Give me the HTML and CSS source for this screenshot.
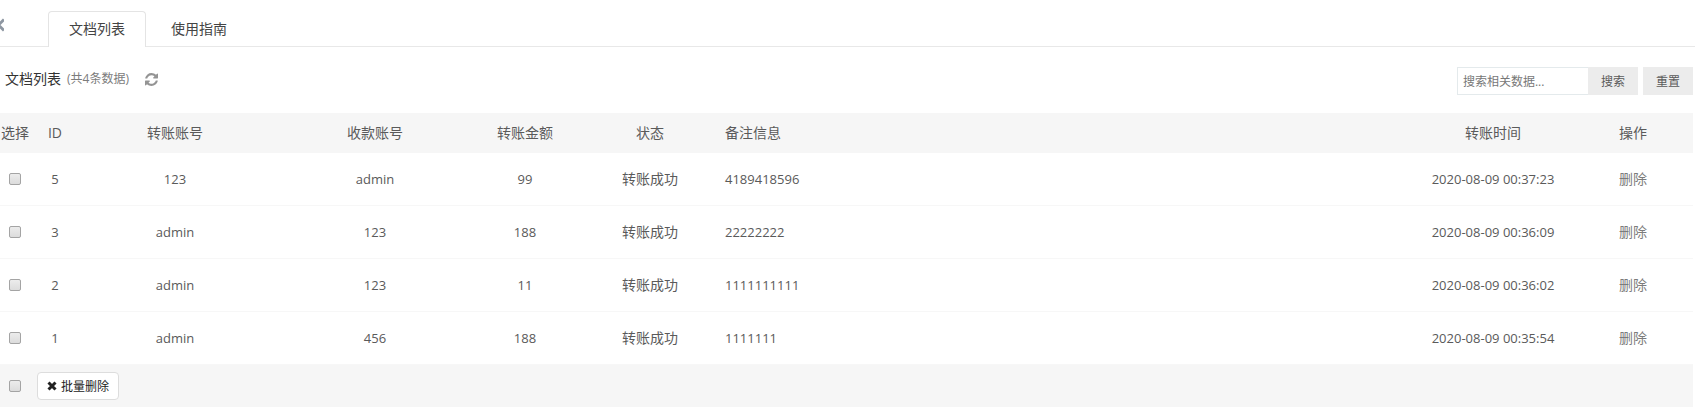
FILE: index.html
```
<!DOCTYPE html>
<html lang="zh-CN">
<head>
<meta charset="utf-8">
<title>文档列表</title>
<link rel="stylesheet" href="styles.css">
</head>
<body>
<nav class="tabs">
  <button class="back" type="button" aria-label="返回"><svg width="4" height="14" viewBox="0 0 4 14"><path d="M4 1.500L-1.500 7l5.500 5.500" fill="none" stroke="#8e97a2" stroke-width="3"/></svg></button>
  <a class="tab active" href="#list">文档列表</a>
  <a class="tab" href="#guide">使用指南</a>
</nav>
<header class="toolbar">
  <h1 class="title">文档列表</h1>
  <span class="count">(共4条数据)</span>
  <button class="refresh" type="button" aria-label="刷新"><svg width="13" height="13" viewBox="0 0 1536 1536"><path fill="#949494" d="M1511 928q0 5-1 7-64 268-268 434.500T764 1536q-146 0-282.500-55T238 1324l-129 129q-19 19-45 19t-45-19-19-45V960q0-26 19-45t45-19h448q26 0 45 19t19 45-19 45l-137 137q71 66 161 102t187 36q134 0 250-65t186-179q11-17 53-117 8-23 30-23h192q13 0 22.500 9.500t9.500 22.500zm25-800v448q0 26-19 45t-45 19h-448q-26 0-45-19t-19-45 19-45l138-138Q969 256 768 256q-134 0-250 65T332 500q-11 17-53 117-8 23-30 23H50q-13 0-22.500-9.500T18 608v-7q65-268 270-434.500T768 0q146 0 284 55.500T1297 212l130-129q19-19 45-19t45 19 19 45z"/></svg></button>
  <form class="search">
    <input class="field" type="text" placeholder="搜索相关数据..." aria-label="搜索相关数据">
    <button class="btn" type="button">搜索</button>
    <button class="btn reset" type="reset">重置</button>
  </form>
</header>
<table class="grid">
  <colgroup>
    <col class="w-check"><col class="w-id"><col class="w-account"><col class="w-account"><col class="w-amount"><col class="w-state"><col><col class="w-time"><col class="w-action">
  </colgroup>
  <thead>
    <tr><th class="check">选择</th><th>ID</th><th>转账账号</th><th>收款账号</th><th>转账金额</th><th>状态</th><th class="note">备注信息</th><th>转账时间</th><th>操作</th></tr>
  </thead>
  <tbody>
    <tr><td class="check"><input class="box" type="checkbox" aria-label="选择 5"></td><td>5</td><td>123</td><td>admin</td><td>99</td><td class="state">转账成功</td><td class="note">4189418596</td><td>2020-08-09 00:37:23</td><td><a class="delete" href="#delete-5">删除</a></td></tr>
    <tr><td class="check"><input class="box" type="checkbox" aria-label="选择 3"></td><td>3</td><td>admin</td><td>123</td><td>188</td><td class="state">转账成功</td><td class="note">22222222</td><td>2020-08-09 00:36:09</td><td><a class="delete" href="#delete-3">删除</a></td></tr>
    <tr><td class="check"><input class="box" type="checkbox" aria-label="选择 2"></td><td>2</td><td>admin</td><td>123</td><td>11</td><td class="state">转账成功</td><td class="note">1111111111</td><td>2020-08-09 00:36:02</td><td><a class="delete" href="#delete-2">删除</a></td></tr>
    <tr><td class="check"><input class="box" type="checkbox" aria-label="选择 1"></td><td>1</td><td>admin</td><td>456</td><td>188</td><td class="state">转账成功</td><td class="note">1111111</td><td>2020-08-09 00:35:54</td><td><a class="delete" href="#delete-1">删除</a></td></tr>
  </tbody>
</table>
<footer class="bulk">
  <input class="box" type="checkbox" aria-label="全选">
  <button class="bulk-delete" type="button"><svg width="10" height="10" viewBox="0 0 10 10"><path d="M1.500 1.500l7 7M8.500 1.500l-7 7" stroke="#222" stroke-width="3"/></svg>批量删除</button>
</footer>
</body>
</html>
```
FILE: styles.css
```
* {
  box-sizing: border-box;
}

body {
  margin: 0;
  padding-right: 2px;
  background: #fff;
  color: #5a5a5a;
  font: 14px/20px "Open Sans", "Noto Sans CJK SC", sans-serif;
}

button,
input {
  margin: 0;
  font-family: inherit;
}

a {
  color: inherit;
  text-decoration: none;
}

svg {
  display: block;
}

.tabs {
  display: flex;
  align-items: flex-end;
  height: 47px;
  margin-right: -2px;
  padding-top: 11px;
  border-bottom: 1px solid #e8e8e8;
}

.back {
  width: 48px;
  height: 36px;
  padding: 0 0 6px;
  border: 0;
  background: none;
}

.tab {
  height: 36px;
  margin-bottom: -1px;
  margin-right: 4px;
  padding: 7px 20px;
  border: 1px solid transparent;
  border-bottom: 0;
  color: #444;
}

.tab.active {
  border-color: #e4e4e4;
  border-radius: 4px 4px 0 0;
  background: #fff;
}

.toolbar {
  display: flex;
  align-items: center;
  height: 66px;
  padding: 0 0 2px 5px;
}

.title {
  margin: 0;
  color: #333;
  font-size: 14px;
  font-weight: 400;
}

.count {
  margin-left: 6px;
  color: #7c7c7c;
  font-size: 12px;
}

.refresh {
  margin-left: 16px;
  padding: 0;
  border: 0;
  background: none;
}

.search {
  display: flex;
  margin-left: auto;
  padding-top: 4px;
}

.field {
  width: 131px;
  height: 28px;
  padding: 0 5px;
  border: 1px solid #e4eaec;
  border-right: 0;
  border-radius: 0;
  font-size: 12px;
}

.field::placeholder {
  color: #777;
  opacity: 1;
}

.btn {
  height: 28px;
  padding: 0 13px;
  border: 0;
  background: #ececec;
  color: #5a5a5a;
  font-size: 12px;
}

.reset {
  margin-left: 5px;
}

.grid {
  width: 100%;
  table-layout: fixed;
  border-collapse: separate;
  border-spacing: 0;
}

.w-check { width: 35px; }
.w-id { width: 40px; }
.w-account { width: 200px; }
.w-amount { width: 100px; }
.w-state { width: 150px; }
.w-time { width: 160px; }
.w-action { width: 120px; }

.grid th {
  height: 40px;
  padding: 0;
  background: #f6f6f6;
  font-weight: 400;
  white-space: nowrap;
}

.grid td {
  height: 53px;
  padding: 0 0 1px;
  border-bottom: 1px solid #f7f7f7;
  font-size: 13px;
  text-align: center;
}

.grid .check {
  padding-right: 5px;
}

.grid .state,
.delete {
  font-size: 14px;
}

.grid .note {
  text-align: left;
}

.delete {
  color: #7c7c7c;
}

.box {
  display: block;
  width: 12px;
  height: 12px;
  margin: 0 auto;
  appearance: none;
  border: 1px solid #a4a4a4;
  border-radius: 2px;
  background: linear-gradient(#ececec, #dcdcdc);
}

.box:checked {
  background: #666;
}

.bulk {
  display: flex;
  align-items: center;
  height: 42px;
  padding-left: 9px;
  background: #f6f6f6;
}

.bulk .box {
  margin: 0 16px 0 0;
}

.bulk-delete {
  display: flex;
  align-items: center;
  gap: 4px;
  height: 28px;
  padding: 0 9px;
  border: 1px solid #ddd;
  border-radius: 4px;
  background: #fff;
  color: #222;
  font-size: 12px;
}
```
